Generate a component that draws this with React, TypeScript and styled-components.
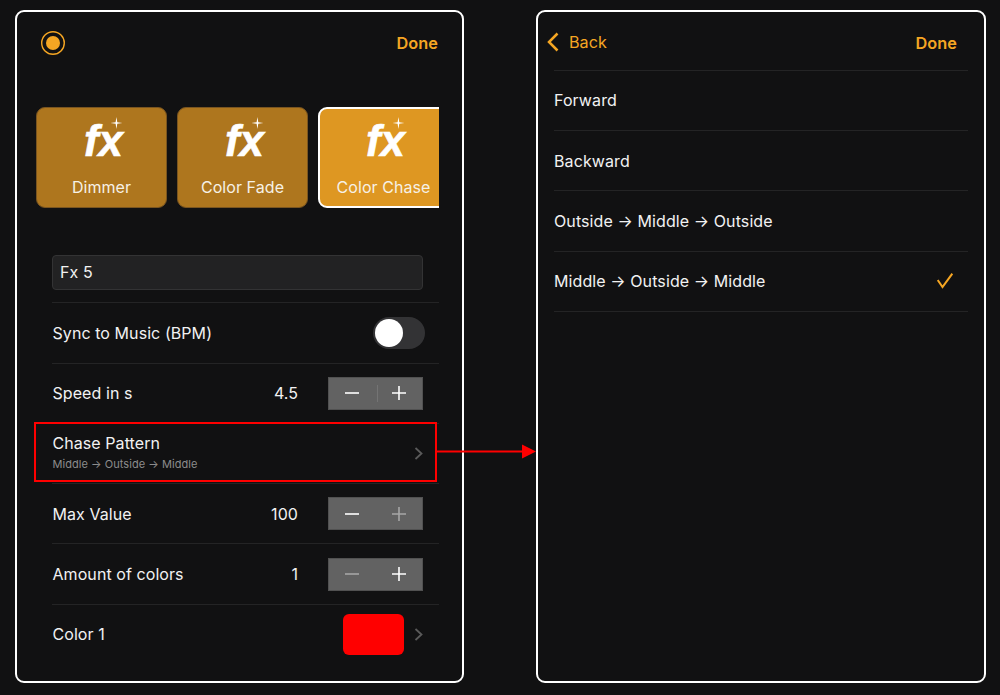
import React from "react";
import styled, { createGlobalStyle } from "styled-components";

const ORANGE = "#f5a623";

const GlobalStyle = createGlobalStyle`
  html, body {
    margin: 0;
    padding: 0;
    background: #111112;
  }
  body {
    font-family: Inter, "Noto Sans", sans-serif;
    color: #f2f2f2;
    letter-spacing: 0.07px;
  }
`;

const Page = styled.div`
  position: relative;
  width: 1000px;
  height: 695px;
  box-sizing: border-box;
  padding: 10px 14px 0 15px;
  display: flex;
  justify-content: space-between;
  overflow: hidden;
`;

const Panel = styled.div<{ $width: number }>`
  width: ${(p) => p.$width}px;
  height: 673px;
  box-sizing: border-box;
  border: 2px solid #fff;
  border-radius: 9px;
  background: #111112;
  display: flex;
  flex-direction: column;
`;

const Header = styled.div`
  height: 58px;
  display: flex;
  align-items: center;
  justify-content: space-between;
  padding: 0 24px 0 24px;
  flex: none;
`;

const Done = styled.span`
  color: ${ORANGE};
  font-size: 16.3px;
  font-weight: 600;
  position: relative;
  top: 2px;
`;

const RecordIcon = styled.svg`
  width: 24px;
  height: 24px;
  display: block;
  position: relative;
  top: 2px;
`;

const CardStrip = styled.div`
  display: flex;
  gap: 10px;
  margin: 37px 23px 0 19px;
  overflow: hidden;
  height: 101px;
  flex: none;
`;

const Card = styled.div<{ $active?: boolean }>`
  flex: none;
  width: 131px;
  height: 101px;
  box-sizing: border-box;
  border-radius: 9px;
  background: ${(p) => (p.$active ? "#de9722" : "#ae761e")};
  border: ${(p) => (p.$active ? "2px solid #fff" : "1px solid #7a5520")};
  position: relative;
`;

const FxMark = styled.div<{ $active?: boolean }>`
  position: absolute;
  top: ${(p) => (p.$active ? "7px" : "8px")};
  left: 50%;
  transform: translateX(calc(-50% + 2px));
  font-family: "Liberation Sans", Arial, sans-serif;
  font-size: 44px;
  line-height: 50px;
  font-weight: 700;
  font-style: italic;
  color: #fff;
  letter-spacing: 0;
  -webkit-text-stroke: 0.6px #fff;
`;

const Sparkle = styled.svg`
  position: absolute;
  top: 1px;
  right: 1px;
  width: 12px;
  height: 12px;
`;

const CardLabel = styled.div<{ $active?: boolean }>`
  position: absolute;
  bottom: ${(p) => (p.$active ? "9px" : "10px")};
  left: 0;
  right: 0;
  text-align: center;
  font-size: 16px;
  line-height: 20px;
  color: #f6f1e6;
`;

const Form = styled.div`
  margin: 47px 23px 0 35px;
  display: flex;
  flex-direction: column;
`;

const NameInput = styled.div`
  width: 371px;
  height: 35px;
  box-sizing: border-box;
  background: #222223;
  border: 1px solid #333334;
  border-radius: 4px;
  padding: 0 7px;
  font-size: 16px;
  line-height: 33px;
  margin-bottom: 12.4px;
`;

const Row = styled.div`
  height: 60.25px;
  box-sizing: border-box;
  border-top: 1px solid #242425;
  display: flex;
  align-items: center;
  font-size: 16px;
  flex: none;
`;

const RowLabel = styled.div<{ $stacked?: boolean }>`
  flex: 1;
  min-width: 0;
  padding-left: 0.5px;
  padding-bottom: ${(p) => (p.$stacked ? "3px" : "0")};
`;

const SubLabel = styled.div`
  font-size: 11px;
  line-height: 14px;
  margin-top: 4px;
  color: #8c8c8c;
  letter-spacing: 0.05px;
`;

const Value = styled.div`
  width: 40px;
  text-align: right;
  margin-right: 30px;
`;

const Stepper = styled.div`
  width: 95px;
  height: 33px;
  margin-right: 16px;
  box-sizing: border-box;
  background: #626262;
  border: 1px solid #515151;
  display: flex;
  align-items: center;
`;

const StepButton = styled.div<{ $dim?: boolean }>`
  flex: 1;
  height: 100%;
  display: flex;
  align-items: center;
  justify-content: center;
  color: ${(p) => (p.$dim ? "#a6a6a6" : "#fff")};
  &:first-child {
    padding-right: 2px;
    box-sizing: border-box;
  }
  & + & {
    position: relative;
  }
  & + &::before {
    content: "";
    position: absolute;
    left: 0;
    top: 7px;
    bottom: 7px;
    width: 1px;
    background: #747474;
  }
`;

const Toggle = styled.div`
  width: 52px;
  height: 32px;
  margin-right: 14px;
  box-sizing: border-box;
  border-radius: 16px;
  background: #333335;
  padding: 2px;
`;

const Knob = styled.div`
  width: 28px;
  height: 28px;
  border-radius: 50%;
  background: #fff;
`;

const Swatch = styled.div`
  width: 61px;
  height: 41px;
  border-radius: 6px;
  background: #ff0000;
  margin-right: 10px;
`;

const ChevronWrap = styled.svg`
  width: 9px;
  height: 13px;
  margin-right: 16px;
  flex: none;
`;

const Highlight = styled.div`
  position: absolute;
  left: 34px;
  top: 422px;
  width: 403px;
  height: 60px;
  box-sizing: border-box;
  border: 2px solid #ff0000;
  pointer-events: none;
`;

const ConnectorArrow = styled.svg`
  position: absolute;
  left: 436px;
  top: 443px;
  width: 100px;
  height: 16px;
`;

const BackHeader = styled.div`
  height: 57.9px;
  display: flex;
  align-items: center;
  justify-content: space-between;
  padding: 0 27px 0 9px;
  flex: none;
`;

const BackLink = styled.div`
  display: flex;
  align-items: center;
  gap: 10px;
  color: ${ORANGE};
  font-size: 16.2px;
  position: relative;
  top: 1px;
  letter-spacing: 0;
`;

const OptionList = styled.div`
  margin: 0 16px;
  border-bottom: 1px solid #242425;
`;

const OptionRow = styled(Row)`
  justify-content: space-between;
  padding-right: 15px;
  padding-bottom: 0.5px;
  letter-spacing: 0.1px;
`;

const Minus = () => (
  <svg width="14" height="14" viewBox="0 0 14 14">
    <path d="M0 7H14" stroke="currentColor" strokeWidth="1.6" />
  </svg>
);

const Plus = () => (
  <svg width="14" height="14" viewBox="0 0 14 14">
    <path d="M0 7H14M7 0V14" stroke="currentColor" strokeWidth="1.6" />
  </svg>
);

const Chevron = () => (
  <ChevronWrap viewBox="0 0 9 13">
    <path d="M1.5 1L7.5 6.5L1.5 12" fill="none" stroke="#5a5a5a" strokeWidth="1.8" />
  </ChevronWrap>
);

const fxCards = [{ name: "Dimmer" }, { name: "Color Fade" }, { name: "Color Chase", active: true }];

const options = ["Forward", "Backward", "Outside → Middle → Outside", "Middle → Outside → Middle"];

const StepperControl = ({ dimMinus, dimPlus }: { dimMinus?: boolean; dimPlus?: boolean }) => (
  <Stepper>
    <StepButton $dim={dimMinus}>
      <Minus />
    </StepButton>
    <StepButton $dim={dimPlus}>
      <Plus />
    </StepButton>
  </Stepper>
);

export default function App() {
  return (
    <Page>
      <GlobalStyle />
      <Panel $width={449}>
        <Header>
          <RecordIcon viewBox="0 0 24 24">
            <circle cx="12" cy="12" r="11.3" fill="none" stroke={ORANGE} strokeWidth="1.4" />
            <circle cx="12" cy="12" r="7" fill={ORANGE} />
          </RecordIcon>
          <Done>Done</Done>
        </Header>
        <CardStrip>
          {fxCards.map((card) => (
            <Card key={card.name} $active={card.active}>
              <FxMark $active={card.active}>
                fx
                <Sparkle viewBox="0 0 13 13">
                  <path d="M6.5 0L7.4 5.6L13 6.5L7.4 7.4L6.5 13L5.6 7.4L0 6.5L5.6 5.6Z" fill="#fff" />
                </Sparkle>
              </FxMark>
              <CardLabel $active={card.active}>{card.name}</CardLabel>
            </Card>
          ))}
        </CardStrip>
        <Form>
          <NameInput>Fx 5</NameInput>
          <Row>
            <RowLabel>Sync to Music (BPM)</RowLabel>
            <Toggle>
              <Knob />
            </Toggle>
          </Row>
          <Row>
            <RowLabel>Speed in s</RowLabel>
            <Value>4.5</Value>
            <StepperControl />
          </Row>
          <Row>
            <RowLabel $stacked>
              Chase Pattern
              <SubLabel>Middle → Outside → Middle</SubLabel>
            </RowLabel>
            <Chevron />
          </Row>
          <Row>
            <RowLabel>Max Value</RowLabel>
            <Value>100</Value>
            <StepperControl dimPlus />
          </Row>
          <Row>
            <RowLabel>Amount of colors</RowLabel>
            <Value>1</Value>
            <StepperControl dimMinus />
          </Row>
          <Row>
            <RowLabel>Color 1</RowLabel>
            <Swatch />
            <Chevron />
          </Row>
        </Form>
      </Panel>
      <Panel $width={450}>
        <BackHeader>
          <BackLink>
            <svg width="12" height="20" viewBox="0 0 12 20">
              <path d="M10.5 1.5L2 10L10.5 18.5" fill="none" stroke={ORANGE} strokeWidth="2.5" />
            </svg>
            Back
          </BackLink>
          <Done>Done</Done>
        </BackHeader>
        <OptionList>
          {options.map((option, i) => (
            <OptionRow key={option}>
              {option}
              {i === 3 && (
                <svg width="16" height="16" viewBox="0 0 16 16">
                  <path d="M0.7 7L5.5 14L15.3 0.7" fill="none" stroke={ORANGE} strokeWidth="2" />
                </svg>
              )}
            </OptionRow>
          ))}
        </OptionList>
      </Panel>
      <Highlight />
      <ConnectorArrow viewBox="0 0 100 16">
        <path d="M0 8.5H86" stroke="#ff0000" strokeWidth="2" />
        <path d="M86 1.5L100 8.5L86 15.5Z" fill="#ff0000" />
      </ConnectorArrow>
    </Page>
  );
}
